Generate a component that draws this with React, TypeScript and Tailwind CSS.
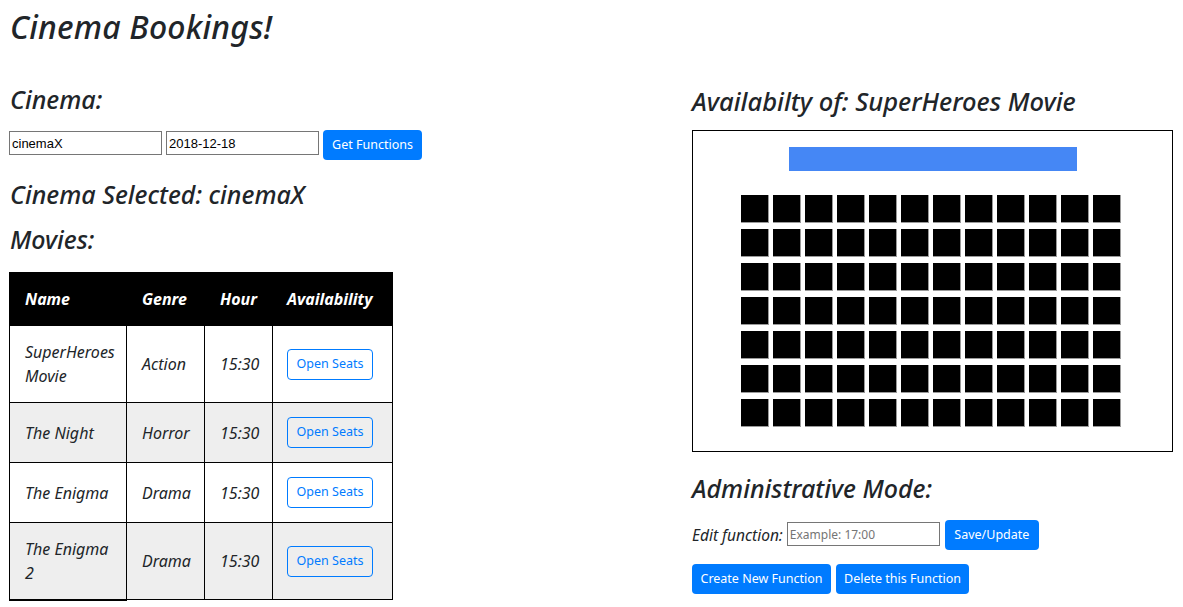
import React from "react";

const F = { fontFamily: '"Noto Sans", "Open Sans", sans-serif' };

const movies = [
  { name: "SuperHeroes Movie", genre: "Action", hour: "15:30" },
  { name: "The Night", genre: "Horror", hour: "15:30" },
  { name: "The Enigma", genre: "Drama", hour: "15:30" },
  { name: "The Enigma 2", genre: "Drama", hour: "15:30" },
];

const rowHeights = ["h-[77px]", "h-[60px]", "h-[60px]", "h-[77px]"];

export default function App() {
  const rows = Array.from({ length: 7 });
  const cols = Array.from({ length: 12 });
  return (
    <div className="w-[1183px] h-[607px] overflow-hidden bg-white text-[#212529] px-[9px]" style={F}>
      <h1 className="italic font-medium text-[32px] leading-[40px] pt-[7px] pl-[1px] m-0 tracking-[0.2px]">Cinema Bookings!</h1>
      <div className="flex">
        <div className="w-[683px] shrink-0">
          <h3 className="italic font-medium text-[25px] leading-[30px] mt-[37px] pl-[1px]">Cinema:</h3>
          <div className="flex items-start mt-[16px] gap-[4px]">
            <input
              className="mt-[1px] w-[153px] h-[24px] border border-[#767676] px-[2px] text-[13px] text-black"
              style={{ fontFamily: '"Liberation Sans", Arial, sans-serif' }}
              defaultValue="cinemaX"
            />
            <input
              className="mt-[1px] w-[153px] h-[24px] border border-[#767676] px-[2px] text-[13px] text-black"
              style={{ fontFamily: '"Liberation Sans", Arial, sans-serif' }}
              defaultValue="2018-12-18"
            />
            <button className="h-[30px] w-[99px] rounded-[4px] bg-[#007bff] text-white text-[12.5px]">Get Functions</button>
          </div>
          <h3 className="italic font-medium text-[25px] leading-[30px] mt-[19px] pl-[1px]">Cinema Selected: cinemaX</h3>
          <h3 className="italic font-medium text-[25px] leading-[30px] mt-[15px] pl-[1px]">Movies:</h3>
          <table className="mt-[18px] table-fixed w-[383px] border-collapse border border-black text-[16px] italic">
            <colgroup>
              <col className="w-[117px]" />
              <col className="w-[78px]" />
              <col className="w-[68px]" />
              <col className="w-[120px]" />
            </colgroup>
            <thead>
              <tr className="bg-black text-white h-[53px]">
                <th className="text-left font-bold pl-[15px] pr-[4px] border border-black">Name</th>
                <th className="text-left font-bold pl-[15px] pr-[4px] border border-black">Genre</th>
                <th className="text-left font-bold pl-[15px] pr-[4px] border border-black">Hour</th>
                <th className="text-left font-bold pl-[14px] pr-[2px] border border-black whitespace-nowrap">Availability</th>
              </tr>
            </thead>
            <tbody>
              {movies.map((m, i) => (
                <tr key={i} className={`${rowHeights[i]} ${i % 2 === 1 ? "bg-[#eeeeee]" : "bg-white"}`}>
                  <td
                    className={`pl-[15px] pr-[6px] border border-black leading-[24px] align-middle ${
                      i === 3 ? "border-b-2" : ""
                    }`}
                  >
                    {m.name}
                  </td>
                  <td className="pl-[15px] pr-[2px] border border-black align-middle">{m.genre}</td>
                  <td className="pl-[15px] pr-[2px] border border-black align-middle">{m.hour}</td>
                  <td className="pl-[14px] pr-[2px] border border-black align-middle">
                    <button className="not-italic h-[31px] w-[86px] rounded-[4px] border border-[#007bff] text-[#007bff] text-[12.5px] bg-transparent">
                      Open Seats
                    </button>
                  </td>
                </tr>
              ))}
            </tbody>
          </table>
        </div>
        <div className="w-[481px] shrink-0">
          <h3 className="italic font-medium text-[25.5px] leading-[30px] mt-[39px]">Availabilty of: SuperHeroes Movie</h3>
          <div className="mt-[14px] h-[322px] border border-black flex flex-col items-center">
            <div className="mt-[16px] w-[288px] h-[24px] bg-[#4587f5]" />
            <div className="mt-[24px] pr-[4px] flex flex-col gap-[6px]">
              {rows.map((_, r) => (
                <div key={r} className="flex gap-[4px]">
                  {cols.map((_, c) => (
                    <div key={c} className="w-[28px] h-[28px] bg-black border-r border-b border-[#9a9a9a]" />
                  ))}
                </div>
              ))}
            </div>
          </div>
          <h3 className="italic font-medium text-[25px] leading-[30px] mt-[21px]">Administrative Mode:</h3>
          <div className="flex items-start mt-[17px]">
            <span className="italic text-[15.5px] mt-[4px]">Edit function:</span>
            <input
              className="mt-[2px] ml-[4px] w-[153px] h-[24px] border border-[#767676] px-[2px] text-[12px] placeholder-[#757575]"
              placeholder="Example: 17:00"
            />
            <button className="ml-[5px] h-[30px] w-[94px] rounded-[4px] bg-[#007bff] text-white text-[12.5px]">Save/Update</button>
          </div>
          <div className="flex gap-[5px] mt-[14px]">
            <button className="h-[30px] w-[139px] rounded-[4px] bg-[#007bff] text-white text-[12.5px]">Create New Function</button>
            <button className="h-[30px] w-[133px] rounded-[4px] bg-[#007bff] text-white text-[12.5px]">Delete this Function</button>
          </div>
        </div>
      </div>
    </div>
  );
}
